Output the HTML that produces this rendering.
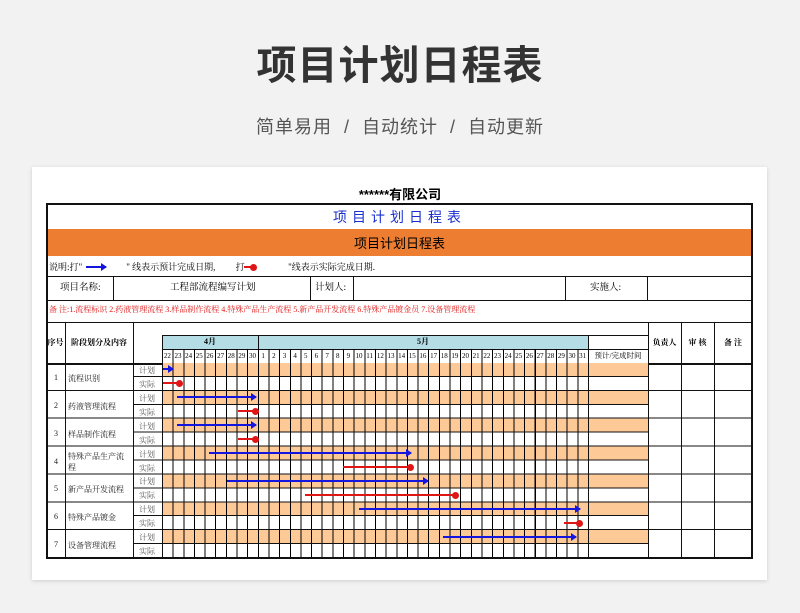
<!DOCTYPE html>
<html><head><meta charset="utf-8"><style>
*{margin:0;padding:0;box-sizing:border-box}
body{width:800px;height:613px;background:#f2f2f2;position:relative;overflow:hidden;font-family:"Liberation Serif","Noto Serif CJK SC",serif;color:#000}
.a{position:absolute}
.h1{left:0;width:800px;top:33px;text-align:center;font:bold 40px "Liberation Sans","Noto Sans CJK SC",sans-serif;color:#333;letter-spacing:1px}
.h2{left:0;width:800px;top:113px;text-align:center;font:18px "Liberation Sans","Noto Sans CJK SC",sans-serif;color:#555;letter-spacing:1px}
.card{left:32px;top:167px;width:735px;height:413px;background:#fff;box-shadow:0 1px 4px rgba(0,0,0,.15)}
.t{font-size:9px;line-height:1}
.c{display:flex;align-items:center;justify-content:center}
.hl{height:1px;background:#111}
.vl{width:1px;background:#111}
.day{position:absolute;top:349px;width:10.65px;height:14px;font-size:7px;display:flex;align-items:center;justify-content:center}
.bl{position:absolute;height:2px;background:#1515e0}
.rl{position:absolute;height:2px;background:#e01515}
.bl:after{content:"";position:absolute;right:-1px;top:-3px;border-left:6px solid #1515e0;border-top:4px solid transparent;border-bottom:4px solid transparent}
.rl:after{content:"";position:absolute;right:-3px;top:-2.5px;width:7px;height:7px;border-radius:50%;background:#e01515}
</style></head><body>
<div class="a h1">项目计划日程表</div>
<div class="a h2">简单易用 &nbsp;/&nbsp; 自动统计 &nbsp;/&nbsp; 自动更新</div>
<div class="a card"></div>
<div class="a" style="left:0;width:800px;top:184px;text-align:center;font:bold 13px 'Liberation Sans','Noto Sans CJK SC',sans-serif">******有限公司</div>
<div class="a" style="left:46px;top:203px;width:707px;height:356px;border:2px solid #111"></div>
<div class="a c" style="left:46px;top:205px;width:707px;height:24px;color:#1a2fd0;font-size:14px;letter-spacing:5px;font-family:'Liberation Sans','Noto Sans CJK SC',sans-serif">项目计划日程表</div>
<div class="a c" style="left:48px;top:229px;width:703px;height:27px;background:#ed7d31;font-size:13px;font-family:'Liberation Sans','Noto Sans CJK SC',sans-serif">项目计划日程表</div>
<div class="a t" style="left:49px;top:263px">说明:打"<span style="display:inline-block;width:26px"></span> &nbsp; &nbsp; &nbsp; &nbsp;" 线表示预计完成日期, &nbsp; &nbsp; &nbsp; &nbsp; 打<span style="display:inline-block;width:12px"></span> &nbsp; &nbsp; &nbsp; &nbsp; &nbsp; &nbsp; &nbsp;"线表示实际完成日期.</div>
<div class="bl" style="left:86px;top:266px;width:20px"></div>
<div class="rl" style="left:244px;top:266px;width:10px"></div>
<div class="a hl" style="left:46px;top:276px;width:707px"></div>
<div class="a t" style="left:60px;top:284px;font-size:9.5px">项目名称:</div>
<div class="a t" style="left:170px;top:284px;font-size:9.5px">工程部流程编写计划</div>
<div class="a t" style="left:315px;top:284px;font-size:9.5px">计划人:</div>
<div class="a t" style="left:590px;top:284px;font-size:9.5px">实施人:</div>
<div class="a vl" style="left:113px;top:276px;height:24px"></div>
<div class="a vl" style="left:310px;top:276px;height:24px"></div>
<div class="a vl" style="left:353px;top:276px;height:24px"></div>
<div class="a vl" style="left:565px;top:276px;height:24px"></div>
<div class="a vl" style="left:647px;top:276px;height:24px"></div>
<div class="a hl" style="left:46px;top:300px;width:707px"></div>
<div class="a t" style="left:49px;top:306px;color:#e01515;font-size:8px;white-space:nowrap">备 注:1.流程标识 2.药液管理流程 3.样品制作流程 4.特殊产品生产流程 5.新产品开发流程 6.特殊产品镀金员 7.设备管理流程</div>
<div class="a hl" style="left:46px;top:322px;width:707px"></div>
<div class="a c t" style="left:46px;top:322px;width:19px;height:41px;font-size:8px;font-weight:bold">序号</div>
<div class="a c t" style="left:65px;top:322px;width:68px;height:41px;font-size:8px;font-weight:bold">阶段划分及内容</div>
<div class="a" style="left:162px;top:335px;width:426px;height:14px;background:#b4dde5"></div>
<div class="a c t" style="left:162px;top:335px;width:96px;height:14px;font-size:8px;font-weight:bold">4月</div>
<div class="a c t" style="left:258px;top:335px;width:330px;height:14px;font-size:8px;font-weight:bold">5月</div>
<div class="a hl" style="left:162px;top:335px;width:486px"></div>
<div class="a hl" style="left:162px;top:349px;width:486px"></div>
<div class="a vl" style="left:258px;top:335px;height:14px"></div>
<div class="a c t" style="left:588px;top:349px;width:60px;height:14px;font-size:7.5px">预计/完成时间</div>
<div class="a c t" style="left:648px;top:322px;width:33px;height:41px;font-size:8px;font-weight:bold">负责人</div>
<div class="a c t" style="left:681px;top:322px;width:33px;height:41px;font-size:8px;font-weight:bold">审 核</div>
<div class="a c t" style="left:714px;top:322px;width:38px;height:41px;font-size:8px;font-weight:bold">备 注</div>
<div class="day" style="left:162px">22</div><div class="day" style="left:172.65px">23</div><div class="day" style="left:183.3px">24</div><div class="day" style="left:193.95px">25</div><div class="day" style="left:204.6px">26</div><div class="day" style="left:215.25px">27</div><div class="day" style="left:225.9px">28</div><div class="day" style="left:236.55px">29</div><div class="day" style="left:247.2px">30</div>
<div class="day" style="left:257.85px">1</div><div class="day" style="left:268.5px">2</div><div class="day" style="left:279.15px">3</div><div class="day" style="left:289.8px">4</div><div class="day" style="left:300.45px">5</div><div class="day" style="left:311.1px">6</div><div class="day" style="left:321.75px">7</div><div class="day" style="left:332.4px">8</div><div class="day" style="left:343.05px">9</div><div class="day" style="left:353.7px">10</div><div class="day" style="left:364.35px">11</div><div class="day" style="left:375px">12</div><div class="day" style="left:385.65px">13</div><div class="day" style="left:396.3px">14</div><div class="day" style="left:406.95px">15</div><div class="day" style="left:417.6px">16</div><div class="day" style="left:428.25px">17</div><div class="day" style="left:438.9px">18</div><div class="day" style="left:449.55px">19</div><div class="day" style="left:460.2px">20</div><div class="day" style="left:470.85px">21</div><div class="day" style="left:481.5px">22</div><div class="day" style="left:492.15px">23</div><div class="day" style="left:502.8px">24</div><div class="day" style="left:513.45px">25</div><div class="day" style="left:524.1px">26</div><div class="day" style="left:534.75px">27</div><div class="day" style="left:545.4px">28</div><div class="day" style="left:556.05px">29</div><div class="day" style="left:566.7px">30</div><div class="day" style="left:577.35px">31</div>
<div class="a" style="left:162px;top:349px;width:427px;height:14px;background:repeating-linear-gradient(90deg,#000 0 1px,transparent 1px 10.65px)"></div>
<div class="a hl" style="left:46px;top:363px;width:707px;height:2px"></div>
<div class="a" style="left:162px;top:363px;width:486px;height:195px;background:repeating-linear-gradient(180deg,#fcc997 0 13.93px,#fff 13.93px 27.86px)"></div>
<div class="a" style="left:162px;top:363px;width:427px;height:195px;background:repeating-linear-gradient(90deg,#000 0 1px,transparent 1px 10.65px)"></div>
<div class="a" style="left:133px;top:363px;width:515px;height:195px;background:repeating-linear-gradient(180deg,transparent 0 12.93px,#111 12.93px 13.93px)"></div>
<div class="a" style="left:46px;top:363px;width:707px;height:195px;background:repeating-linear-gradient(180deg,transparent 0 26.86px,#111 26.86px 27.86px)"></div>
<div class="a vl" style="left:65px;top:322px;height:236px"></div>
<div class="a vl" style="left:133px;top:322px;height:236px"></div>
<div class="a vl" style="left:162px;top:335px;height:223px"></div>
<div class="a vl" style="left:588px;top:335px;height:223px"></div>
<div class="a vl" style="left:648px;top:322px;height:236px"></div>
<div class="a vl" style="left:681px;top:322px;height:236px"></div>
<div class="a vl" style="left:714px;top:322px;height:236px"></div>
<div style="position:absolute;left:46px;top:363px;width:116px;font-size:8px;color:#222">
<div style="position:relative;height:27.86px"><span class="a" style="left:8px;top:10px">1</span><span class="a" style="left:22px;top:10px">流程识别</span><span class="a" style="left:93px;top:2px;color:#555">计划</span><span class="a" style="left:93px;top:16px;color:#555">实际</span></div>
<div style="position:relative;height:27.86px"><span class="a" style="left:8px;top:10px">2</span><span class="a" style="left:22px;top:10px">药液管理流程</span><span class="a" style="left:93px;top:2px;color:#555">计划</span><span class="a" style="left:93px;top:16px;color:#555">实际</span></div>
<div style="position:relative;height:27.86px"><span class="a" style="left:8px;top:10px">3</span><span class="a" style="left:22px;top:10px">样品制作流程</span><span class="a" style="left:93px;top:2px;color:#555">计划</span><span class="a" style="left:93px;top:16px;color:#555">实际</span></div>
<div style="position:relative;height:27.86px"><span class="a" style="left:8px;top:10px">4</span><span class="a" style="left:22px;top:4px;width:58px;line-height:11px">特殊产品生产流程</span><span class="a" style="left:93px;top:2px;color:#555">计划</span><span class="a" style="left:93px;top:16px;color:#555">实际</span></div>
<div style="position:relative;height:27.86px"><span class="a" style="left:8px;top:10px">5</span><span class="a" style="left:22px;top:10px">新产品开发流程</span><span class="a" style="left:93px;top:2px;color:#555">计划</span><span class="a" style="left:93px;top:16px;color:#555">实际</span></div>
<div style="position:relative;height:27.86px"><span class="a" style="left:8px;top:10px">6</span><span class="a" style="left:22px;top:10px">特殊产品镀金</span><span class="a" style="left:93px;top:2px;color:#555">计划</span><span class="a" style="left:93px;top:16px;color:#555">实际</span></div>
<div style="position:relative;height:27.86px"><span class="a" style="left:8px;top:10px">7</span><span class="a" style="left:22px;top:10px">设备管理流程</span><span class="a" style="left:93px;top:2px;color:#555">计划</span><span class="a" style="left:93px;top:16px;color:#555">实际</span></div>
</div>
<div class="bl" style="left:163px;top:368px;width:10px"></div>
<div class="rl" style="left:163px;top:382px;width:17px"></div>
<div class="bl" style="left:177px;top:396px;width:79px"></div>
<div class="rl" style="left:238px;top:410px;width:18px"></div>
<div class="bl" style="left:177px;top:424px;width:79px"></div>
<div class="rl" style="left:238px;top:438px;width:18px"></div>
<div class="bl" style="left:209px;top:452px;width:202px"></div>
<div class="rl" style="left:343px;top:466px;width:68px"></div>
<div class="bl" style="left:227px;top:480px;width:201px"></div>
<div class="rl" style="left:305px;top:494px;width:151px"></div>
<div class="bl" style="left:359px;top:508px;width:221px"></div>
<div class="rl" style="left:564px;top:522px;width:16px"></div>
<div class="bl" style="left:443px;top:536px;width:133px"></div>
</body></html>
